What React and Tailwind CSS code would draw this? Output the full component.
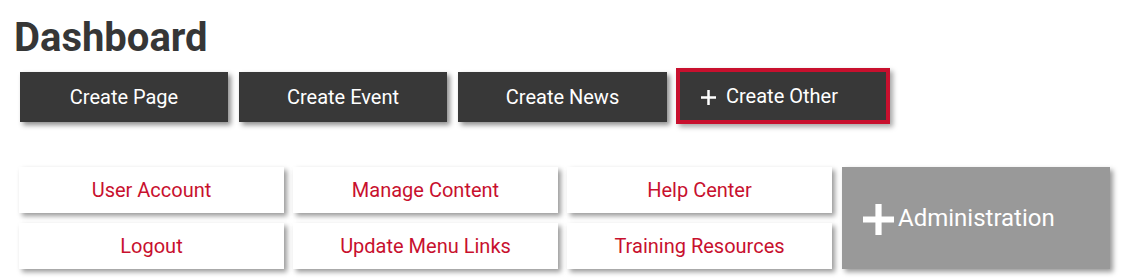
import React from "react";

function Plus({ className, stroke }) {
  return (
    <svg viewBox="0 0 30 30" className={className} fill="none">
      <path d="M15 0V30M0 15H30" stroke="currentColor" strokeWidth={stroke} />
    </svg>
  );
}

const darkBtn =
  "h-[50px] w-[208px] bg-[#383838] text-white text-[20px] flex items-center justify-center shadow-[3px_3px_5px_rgba(0,0,0,0.45)]";

const card =
  "h-[46px] bg-white text-[#c8102e] text-[20px] flex items-center justify-center shadow-[3px_3px_5px_rgba(0,0,0,0.4)]";

export default function App() {
  return (
    <div className="w-[1124px] h-[279px] bg-white overflow-hidden font-['Roboto',sans-serif]">
      <h1 className="pl-[14px] pt-[14px] text-[40px] leading-[48px] font-bold text-[#363636]">
        Dashboard
      </h1>
      <div className="mt-[10px] pl-[20px] flex items-start gap-[11px]">
        <div className={darkBtn}>Create Page</div>
        <div className={darkBtn}>Create Event</div>
        <div className={darkBtn + " w-[209px]"}>Create News</div>
        <div className="-mt-[4px] -ml-[2px] h-[56px] w-[214px] border-4 border-[#c8102e] bg-[#383838] text-white text-[20px] flex items-center pl-[21px] shadow-[3px_3px_5px_rgba(0,0,0,0.35)]">
          <Plus className="w-[15px] h-[15px] mr-[10px] mt-[2px]" stroke={5} />
          Create Other
        </div>
      </div>
      <div className="mt-[43px] pl-[19px] grid grid-cols-[265px_265px_265px_269px] grid-rows-[46px_46px] gap-x-[9px] gap-y-[10px]">
        <div className={card}>User Account</div>
        <div className={card}>Manage Content</div>
        <div className={card}>Help Center</div>
        <div className="row-span-2 ml-[1px] bg-[#999999] text-white text-[24px] flex items-center pl-[21px] shadow-[3px_3px_5px_rgba(0,0,0,0.4)]">
          <Plus className="w-[31px] h-[31px] mr-[4px] mt-[2px]" stroke={6} />
          Administration
        </div>
        <div className={card}>Logout</div>
        <div className={card}>Update Menu Links</div>
        <div className={card}>Training Resources</div>
      </div>
    </div>
  );
}
